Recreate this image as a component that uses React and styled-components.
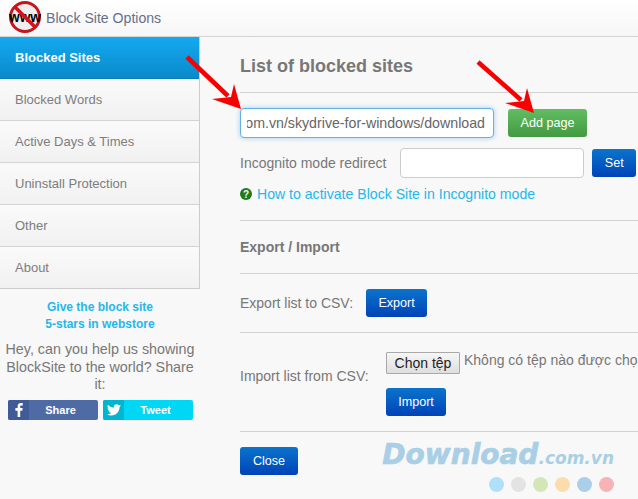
import React, { useEffect, useRef } from "react";
import styled, { createGlobalStyle } from "styled-components";

const menu = [
  "Blocked Sites",
  "Blocked Words",
  "Active Days & Times",
  "Uninstall Protection",
  "Other",
  "About",
];

function App() {
  const urlRef = useRef(null);

  // the long url is scrolled to its end, as in a focused input
  useEffect(() => {
    urlRef.current.scrollLeft = urlRef.current.scrollWidth;
  }, []);

  return (
    <>
      <GlobalStyle />
      <Page>
        <Header>
          <svg width="44" height="34" viewBox="0 0 44 34">
            <circle cx="25" cy="16" r="14.5" fill="#eee" stroke="#c4161c" strokeWidth="3" />
            <text x="25" y="21" textAnchor="middle" fontFamily="Liberation Sans" fontWeight="700" fontSize="15" fill="#000" textLength="32" lengthAdjust="spacingAndGlyphs">www</text>
            <line x1="15" y1="6" x2="35" y2="26" stroke="#d0141c" strokeWidth="3.6" />
          </svg>
          <HeaderTitle>Block Site Options</HeaderTitle>
        </Header>
        <Body>
          <Sidebar>
            <Menu>
              {menu.map((name, i) => (
                <MenuItem key={name} $active={i === 0}>{name}</MenuItem>
              ))}
            </Menu>
            <Rate>Give the block site<br />5-stars in webstore</Rate>
            <ShareText>Hey, can you help us showing BlockSite to the world? Share it:</ShareText>
            <ShareRow>
              <ShareButton $bg="#4f6ba6">
                <ShareIcon $bg="#3f5b98">
                  <svg width="8" height="14" viewBox="0 0 8 14"><path d="M5.2 14V7.700h2.100l.4-2.600H5.200V3.600c0-.8.3-1.200 1.200-1.200h1.400V.2C7.500.1 6.800 0 6 0 4 0 2.600 1.200 2.600 3.400v1.700H.4v2.600h2.200V14z" fill="#fff" /></svg>
                </ShareIcon>
                <ShareLabel>Share</ShareLabel>
              </ShareButton>
              <ShareButton $bg="#00d7f5">
                <ShareIcon $bg="#00b5d0">
                  <svg width="14" height="12" viewBox="0 0 24 20"><path d="M24 2.400a10 10 0 0 1-2.800.8A5 5 0 0 0 23.300.500a9.800 9.800 0 0 1-3.100 1.200A4.900 4.900 0 0 0 11.800 6.200 14 14 0 0 1 1.700.900a4.900 4.900 0 0 0 1.500 6.600 4.900 4.900 0 0 1-2.200-.6c0 2.400 1.700 4.400 3.900 4.900a5 5 0 0 1-2.200.1 4.900 4.900 0 0 0 4.600 3.400A9.900 9.900 0 0 1 0 17.300 14 14 0 0 0 7.500 19.500c9.100 0 14.300-7.700 14-14.600A10 10 0 0 0 24 2.400z" fill="#fff" /></svg>
                </ShareIcon>
                <ShareLabel>Tweet</ShareLabel>
              </ShareButton>
            </ShareRow>
          </Sidebar>
          <Content>
            <Title>List of blocked sites</Title>
            <Rule />
            <Row $gap="14px" $top="15px">
              <UrlInput ref={urlRef} readOnly value="http://download.com.vn/skydrive-for-windows/download" />
              <Button $green $w="79px">Add page</Button>
            </Row>
            <Row $gap="8px" $top="10px">
              <Label $mr="6px">Incognito mode redirect</Label>
              <RedirectInput />
              <Button $w="44px">Set</Button>
            </Row>
            <HelpRow>
              <svg width="12" height="12" viewBox="0 0 12 12">
                <circle cx="6" cy="6" r="6" fill="#1e7a1e" />
                <text x="6" y="9.500" textAnchor="middle" fontFamily="Liberation Sans" fontWeight="700" fontSize="10" fill="#fff">?</text>
              </svg>
              <HelpLink>How to activate Block Site in Incognito mode</HelpLink>
            </HelpRow>
            <Rule $top="18px" />
            <Subtitle>Export / Import</Subtitle>
            <Rule $top="18px" />
            <Row $gap="13px" $top="15px">
              <Label>Export list to CSV:</Label>
              <Button $w="61px">Export</Button>
            </Row>
            <Rule $top="15px" />
            <ImportRow>
              <ImportLabel $mr="16px">Import list from CSV:</ImportLabel>
              <ImportColumn>
                <FileRow>
                  <FileButton>Chọn tệp</FileButton>
                  <FileText>Không có tệp nào được chọn</FileText>
                </FileRow>
                <Button $w="60px">Import</Button>
              </ImportColumn>
            </ImportRow>
            <Rule $top="15px" />
            <Row $top="15px">
              <Button $w="58px">Close</Button>
            </Row>
          </Content>
        </Body>
        <Arrows width="638" height="499" viewBox="0 0 638 499">
          <line x1="187" y1="57" x2="228" y2="96" stroke="#f80000" strokeWidth="4.500" />
          <path d="M241 109 L234 84 L231 97 L212 99 Z" fill="#f80000" />
          <line x1="478" y1="62" x2="521" y2="100" stroke="#f80000" strokeWidth="4.500" />
          <path d="M534 113 L527 88 L524 101 L505 103 Z" fill="#f80000" />
        </Arrows>
        <Watermark>
          <WatermarkText>Download<small>.com.vn</small></WatermarkText>
          <Dots>
            {["#aee1f9", "#e3e3e3", "#d3e6b8", "#fbdcab", "#abcfe8", "#f7b3b5"].map((c) => (
              <Dot key={c} $c={c} />
            ))}
          </Dots>
        </Watermark>
      </Page>
    </>
  );
}

const GlobalStyle = createGlobalStyle`
  html, body {
    margin: 0;
    padding: 0;
    background: #f8f8f8;
    overflow: hidden;
  }
  * {
    box-sizing: border-box;
  }
`;

const Page = styled.div`
  position: relative;
  width: 638px;
  height: 499px;
  overflow: hidden;
  background: #f8f8f8;
  font-family: "Liberation Sans", Arial, sans-serif;
  color: #777;
`;

const Header = styled.div`
  display: flex;
  align-items: center;
  height: 37px;
  gap: 2px;
  background: linear-gradient(#fff, #f6f6f6);
  border-bottom: 1px solid #d4d4d4;
`;

const HeaderTitle = styled.div`
  font-size: 14.1px;
  color: #67708a;
`;

const Body = styled.div`
  display: flex;
`;

const Sidebar = styled.div`
  width: 200px;
  flex: none;
`;

const Menu = styled.div`
  display: flex;
  flex-direction: column;
  border-right: 1px solid #ccc;
  border-bottom: 1px solid #ccc;
`;

const MenuItem = styled.div`
  display: flex;
  align-items: center;
  height: 42px;
  padding-left: 15px;
  font-size: 13px;
  font-weight: ${(p) => (p.$active ? 700 : 400)};
  color: ${(p) => (p.$active ? "#fff" : "#7d7d7d")};
  background: ${(p) =>
    p.$active
      ? "linear-gradient(#14a9f0, #0a8ac9)"
      : "linear-gradient(#fafafa, #f1f1f1)"};
  border-bottom: 1px solid ${(p) => (p.$active ? "#0a7fb8" : "#d4d4d4")};
  &:last-child {
    height: 41px;
    border-bottom: none;
  }
`;

const Rate = styled.div`
  margin-top: 10px;
  text-align: center;
  font-size: 12px;
  font-weight: 700;
  line-height: 17px;
  color: #25b7ea;
`;

const ShareText = styled.div`
  margin-top: 8px;
  padding: 0 5px;
  text-align: center;
  font-size: 14.3px;
  line-height: 17.5px;
  color: #777;
`;

const ShareRow = styled.div`
  display: flex;
  gap: 5px;
  margin-top: 6px;
  padding-left: 8px;
`;

const ShareButton = styled.div`
  display: flex;
  width: 90px;
  height: 20px;
  border-radius: 2px;
  overflow: hidden;
  background: ${(p) => p.$bg};
`;

const ShareIcon = styled.div`
  display: flex;
  align-items: center;
  justify-content: center;
  width: 21px;
  background: ${(p) => p.$bg};
`;

const ShareLabel = styled.div`
  flex: 1;
  padding-right: 6px;
  text-align: center;
  font-size: 11px;
  line-height: 20px;
  font-weight: 700;
  color: #fff;
`;

const Content = styled.div`
  flex: 1;
  padding: 19px 0 0 40px;
  min-width: 0;
`;

const Title = styled.h1`
  margin: 0;
  font-size: 18px;
  line-height: 20px;
  font-weight: 700;
  color: #777;
`;

const Rule = styled.div`
  height: 1px;
  margin-top: ${(p) => p.$top || "16px"};
  background: #d2d2d2;
`;

const Row = styled.div`
  display: flex;
  align-items: center;
  gap: ${(p) => p.$gap || "0"};
  margin-top: ${(p) => p.$top || "16px"};
`;

const UrlInput = styled.input`
  width: 254px;
  height: 30px;
  padding: 0 8px 0 6px;
  border: 1px solid #66afe9;
  border-radius: 4px;
  box-shadow: 0 0 5px rgba(102, 175, 233, 0.6);
  background: #fff;
  font-family: inherit;
  font-size: 14.2px;
  color: #666;
  outline: none;
`;

const RedirectInput = styled.input`
  width: 184px;
  height: 30px;
  border: 1px solid #ccc;
  border-radius: 4px;
  background: #fff;
`;

const Label = styled.div`
  flex: none;
  white-space: nowrap;
  font-size: 14px;
  color: #777;
  margin-right: ${(p) => p.$mr || "0"};
`;

const ImportLabel = styled(Label)`
  width: 130px;
  margin-bottom: 16px;
`;

const Button = styled.div`
  display: flex;
  align-items: center;
  justify-content: center;
  width: ${(p) => p.$w};
  height: 28px;
  flex: none;
  border-radius: 3px;
  font-size: 12.6px;
  color: #fff;
  background: ${(p) =>
    p.$green
      ? "linear-gradient(#62bd62, #429a42)"
      : "linear-gradient(#0a74cc, #0043b8)"};
`;

const HelpRow = styled.div`
  display: flex;
  align-items: center;
  gap: 5px;
  margin-top: 8px;
  height: 16px;
`;

const HelpLink = styled.span`
  font-size: 14.1px;
  color: #25b7ea;
`;

const Subtitle = styled.div`
  margin-top: 18px;
  font-size: 14px;
  font-weight: 700;
  line-height: 16px;
  color: #777;
`;

const ImportRow = styled.div`
  display: flex;
  align-items: center;
  margin-top: 19px;
`;

const ImportColumn = styled.div`
  display: flex;
  flex-direction: column;
  align-items: flex-start;
  gap: 14px;
`;

const FileRow = styled.div`
  display: flex;
  align-items: flex-start;
  gap: 4px;
  white-space: nowrap;
`;

const FileButton = styled.div`
  flex: none;
  width: 74px;
  height: 22px;
  border: 1px solid #a9a9a9;
  border-radius: 1px;
  background: linear-gradient(#f6f6f6, #dedede);
  font-size: 14px;
  line-height: 20px;
  text-align: center;
  color: #222;
`;

const FileText = styled.div`
  font-size: 14px;
  line-height: 16px;
  color: #777;
`;

const Arrows = styled.svg`
  position: absolute;
  top: 0;
  left: 0;
  pointer-events: none;
`;

const Watermark = styled.div`
  position: absolute;
  right: 24px;
  top: 439px;
  display: flex;
  flex-direction: column;
  align-items: flex-end;
`;

const WatermarkText = styled.div`
  font-family: "DejaVu Sans", sans-serif;
  font-size: 28px;
  line-height: 32px;
  font-weight: 700;
  font-style: italic;
  color: #a9cfe6;
  white-space: nowrap;
  -webkit-text-stroke: 0.7px #a9cfe6;
  small {
    font-size: 17px;
    -webkit-text-stroke: 0;
  }
`;

const Dots = styled.div`
  display: flex;
  gap: 7px;
  margin-top: 3px;
`;

const Dot = styled.div`
  width: 15px;
  height: 15px;
  border-radius: 50%;
  background: ${(p) => p.$c};
`;

export default App;
